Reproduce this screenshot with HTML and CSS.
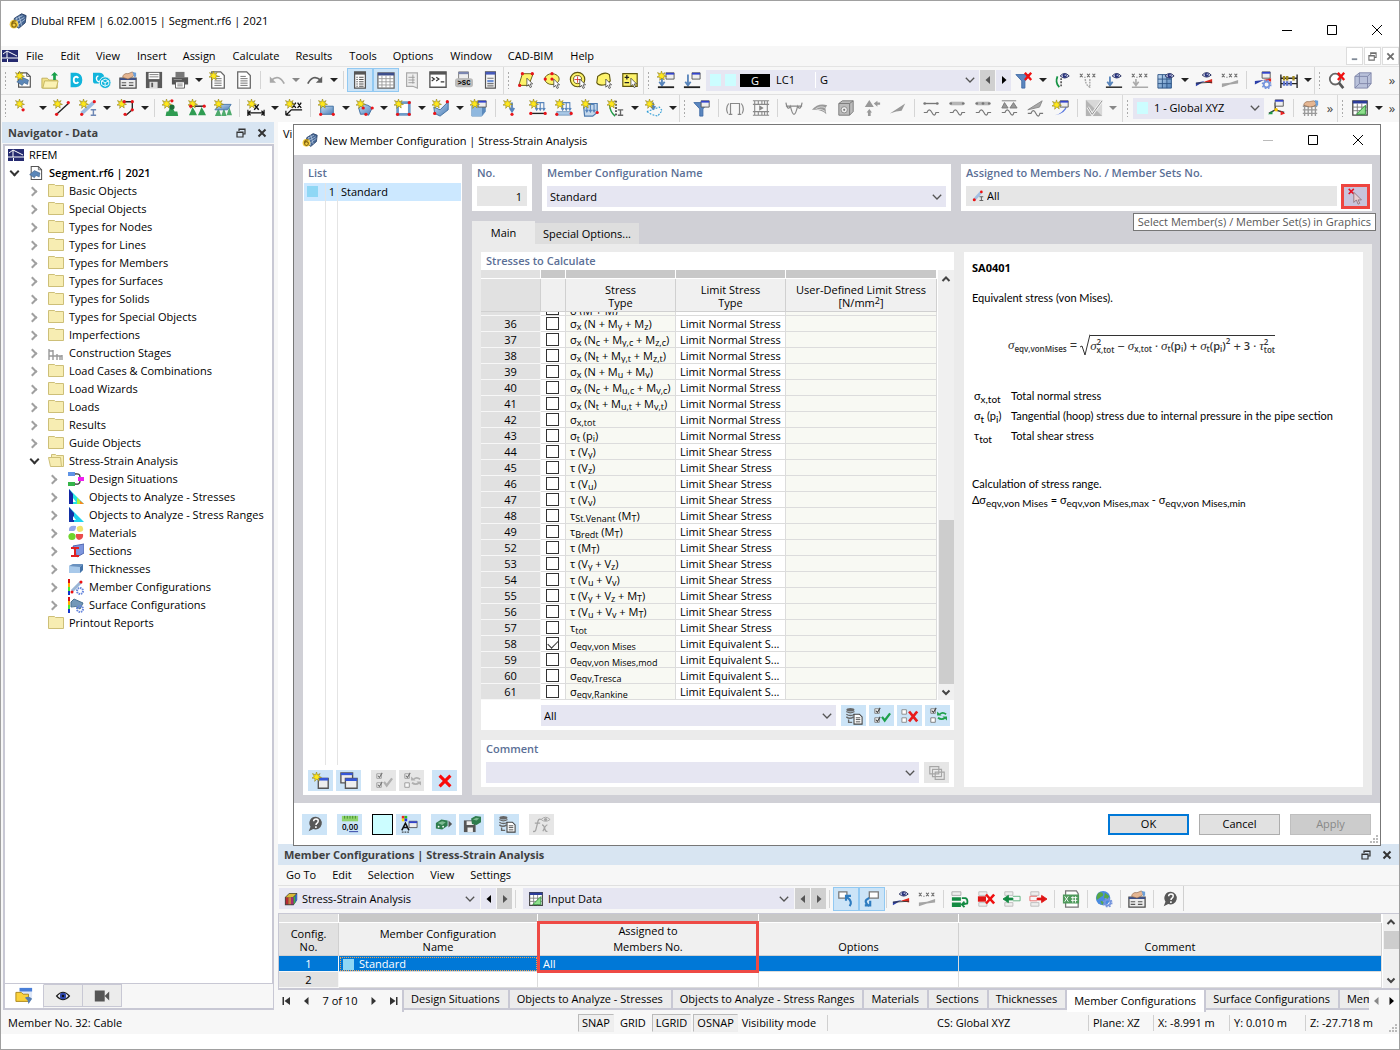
FILE: index.html
```html
<!DOCTYPE html>
<html lang="en">
<head>
<meta charset="utf-8">
<title>Dlubal RFEM | 6.02.0015 | Segment.rf6 | 2021</title>
<link rel="stylesheet" href="styles.css">
</head>
<body>
<svg class="sprite" aria-hidden="true">
<defs>
<path id="star" d="M5 0l1 3.2 3-1.4-1.6 2.8L10.5 6 7.4 6.6 8 10 5.4 7.8 3 10.4 3.4 7 0 6.8 2.6 4.8 .6 1.8 4 3.2z" fill="#ffe81a" stroke="#94851c" stroke-width=".7"/>
<circle id="dot" r="1.8" fill="#e8151b"/>
<g id="win"><path d="M0 0h9v7H0z" fill="#eee" stroke="#555"/><path d="M0 0h9v2H0z" fill="#3344cc"/></g>
<g id="eye"><path d="M0 3.5Q5 -2 10 3.5Q5 8 0 3.5z" fill="#dfe3f5" stroke="#1b2354"/><circle cx="5" cy="3.3" r="2.4" fill="#27327c"/><circle cx="5.6" cy="2.6" r=".7" fill="#fff"/></g>
<g id="gear"><circle r="3.2" fill="none" stroke="#7595dd" stroke-width="2"/><circle r="4.7" fill="none" stroke="#7595dd" stroke-width="1.6" stroke-dasharray="1.9 1.8"/></g>
<path id="pointer" d="M0 0v9l2-2 1.6 3.4 1.6-.8L3.6 6.4H6.4z" fill="#fff" stroke="#333" stroke-width=".8"/>
<path id="xmark" d="M1 1l7 8M8 1L1 9" stroke="#f01010" stroke-width="2.6" fill="none"/>
<path id="loads" d="M1 1h9M1.500 1v8M5.500 1v8M9.500 1v8M0 7l1.500 2.500L3 7M4 7l1.500 2.500L7 7M8 7l1.500 2.500L11 7" stroke="#5784bb" stroke-width="1.200" fill="none"/>
<linearGradient id="blue" x2="1" y2="1"><stop stop-color="#c5dcf2"/><stop offset="1" stop-color="#4d7fb8"/></linearGradient>
<path id="wave" d="M0 6h3.500Q6 0 9 6T13.500 6H17" stroke="#777" stroke-width="1.300" fill="none"/>
<path id="xxx" d="M1 3l3 4M4 3L1 7M9 3l3 4M12 3L9 7M15 3l3 4M18 3l-3 4M6 7h1.200" stroke="#666" stroke-width="1.200" fill="none"/>
</defs>
<symbol id="app" viewBox="0 0 20 20"><path d="M6 7L14 2l5 2-1 8-7 6-6-4z" fill="#466795" stroke="#243c63"/><path d="M7 8l8-4M8 11l9-5M10 14l8-6M11 4l3 11M8 6l3 11" stroke="#b5c7df" stroke-width=".9"/><circle cx="5.500" cy="13.500" r="4.800" fill="#f3cf46"/><path d="M8 10Q3 9 3 14M3.200 14.500a2.400 2.400 0 1 1 4.800 0a2.400 2.400 0 1 1-4.800 0" fill="none" stroke="#876710" stroke-width="1.400"/></symbol>
<symbol id="rfem" viewBox="0 0 16 12"><path d="M0 0h16v12H0z" fill="#252a70"/><path d="M0 8h16M5 1v7M1 4l4-3 10 5M5.500 9v3" stroke="#fff" fill="none"/></symbol>
<symbol id="file" viewBox="0 0 20 20"><path d="M4 2h9l4 4v12H4z" fill="#fff" stroke="#555" stroke-width="1.300"/><path d="M13 2v4h4" fill="none" stroke="#555"/><path d="M2 12l6-5 7 3-1 5-4-2-2 3z" fill="#5b87b8" stroke="#35577f" stroke-width=".6"/></symbol>
<symbol id="new" viewBox="0 0 20 20"><use href="#file"/><use href="#star"/></symbol>
<symbol id="open" viewBox="0 0 20 20"><path d="M1 8h6l2 2h9v9H1z" fill="#f2e28a" stroke="#bfae55"/><path d="M2 19l2-8h15l-2 8z" fill="#fbf2b4" stroke="#c3b35c"/><path d="M15 1l4 4h-2.500v5h-3V5H11z" fill="#18a04a"/></symbol>
<symbol id="center" viewBox="0 0 20 20"><path d="M4 2h6q7 1 7 8t-7 8H4z" fill="#12b5dc"/><path d="M12.500 8q-1-2-3-1.500Q7.500 7 7.500 10t2 3.500q2 .4 3-1.500" fill="none" stroke="#fff" stroke-width="2"/></symbol>
<symbol id="cloud" viewBox="0 0 20 20"><path d="M0 2h7q5 0 6 6v6H3q-3 0-3-3z" fill="#12b5dc"/><circle cx="13.500" cy="13" r="6.500" fill="#12b5dc" stroke="#f7f7f7"/><path d="M9.500 11l4-2 4 2v4l-4 2-4-2zM9.500 11l4 2 4-2M13.500 13v4" stroke="#fff" fill="none"/><path d="M6 5.500q-3 1-2 4t3 2" stroke="#fff" stroke-width="1.400" fill="none"/></symbol>
<symbol id="manage" viewBox="0 0 20 20"><path d="M1 8h18v11H1z" fill="#ececec" stroke="#4b4b4b" stroke-width="1.400"/><path d="M1 8h18v2H1z" fill="#3b4f8a"/><path d="M3 13h5M3 16h5M11 13h5M11 16h5" stroke="#555" stroke-width="1.200"/><path d="M4 7q1-5 6-4l5-2 3 3-4 3-4 2z" fill="#e5b692" stroke="#8d6448" stroke-width=".7"/><path d="M15 1l4 1v4l-2 1z" fill="#6c9fd8"/></symbol>
<symbol id="save" viewBox="0 0 20 20"><path d="M1 1h18v18H1z" fill="#5a5a5a"/><path d="M4 2h12v7H4z" fill="#fff"/><path d="M5 4h10M5 6.500h10" stroke="#777"/><path d="M5 12h9v7H5z" fill="#ddd"/><path d="M7 13h2v5H7z" fill="#5a5a5a"/></symbol>
<symbol id="print" viewBox="0 0 20 20"><path d="M5 1h10v6H5z" fill="#777"/><path d="M1 7h18v8H1z" fill="#555"/><path d="M5 12h10v7H5z" fill="#fff" stroke="#555"/><path d="M7 14.500h6M7 16.500h6" stroke="#777"/><path d="M3 9.500h9" stroke="#999"/></symbol>
<symbol id="doc" viewBox="0 0 20 20"><path d="M3 1h10l4 4v14H3z" fill="#fff" stroke="#666" stroke-width="1.400"/><path d="M6 6h6M6 8.500h8M6 11h8M6 13.500h8M6 16h8" stroke="#666"/></symbol>
<symbol id="newdoc" viewBox="0 0 20 20"><use href="#doc"/><use href="#star"/></symbol>
<symbol id="undo" viewBox="0 0 20 20"><path d="M4 10Q12 3 18 14" fill="none" stroke="#a9a9a9" stroke-width="2"/><path d="M2 6v7h7z" fill="#a9a9a9"/></symbol>
<symbol id="redo" viewBox="0 0 20 20"><path d="M16 10Q8 3 2 14" fill="none" stroke="#5e5e5e" stroke-width="2"/><path d="M18 6v7h-7z" fill="#5e5e5e"/></symbol>
<symbol id="plist" viewBox="0 0 20 20"><path d="M4 1h12v18H4z" fill="#fafafa" stroke="#555" stroke-width="1.400"/><path d="M4 1h12v3H4z" fill="#555"/><path d="M6 7h1.500M9 7h5M6 9.500h1.500M9 9.500h5M6 12h1.500M9 12h5M6 14.500h1.500M9 14.500h5M6 17h1.500M9 17h5" stroke="#555" stroke-width="1.200"/></symbol>
<symbol id="pgrid" viewBox="0 0 20 20"><path d="M1 2h18v17H1z" fill="#fff" stroke="#666" stroke-width="1.400"/><path d="M1 2h18v3H1z" fill="#3d4f8d"/><path d="M1 8.500h18M1 12h18M1 15.500h18M5.500 5v14M10 5v14M14.500 5v14" stroke="#9a9a9a"/></symbol>
<symbol id="glist" viewBox="0 0 20 20"><path d="M4 2h12v17l-5-2H4z" fill="#eee" stroke="#aaa" stroke-width="1.300"/><path d="M6 7h7M6 10h7M6 13h7M11 4v10" stroke="#999"/></symbol>
<symbol id="console" viewBox="0 0 20 20"><path d="M1 1h18v17H1z" fill="#fff" stroke="#555" stroke-width="1.500"/><path d="M1 1h18v3H1z" fill="#555"/><path d="M3 7l3 2-3 2M8 7l3 2-3 2M13 12h4" fill="none" stroke="#333" stroke-width="1.300"/></symbol>
<symbol id="script" viewBox="0 0 20 20"><path d="M4 1h11v8H4z" fill="#eee" stroke="#777"/><path d="M4 1h11v2.500H4z" fill="#7b86b0"/><rect x="0" y="8" width="20" height="10" rx="3" fill="#bbb"/><text x="10" y="16" font-size="8" text-anchor="middle" class="mono">&gt;SC</text></symbol>
<symbol id="panel" viewBox="0 0 20 20"><path d="M5 1h11v18H5z" fill="#f5f5f5" stroke="#555" stroke-width="1.300"/><path d="M5 1h11v3H5z" fill="#4659b9"/><path d="M7 8h7M7 14h7M7 16.500h7" stroke="#777" stroke-width="1.200"/><path d="M7 10h7v2.500H7z" fill="#6b8fd4"/></symbol>
<symbol id="selpoly" viewBox="0 0 20 20"><path d="M6 3h12l-5 13H2z" fill="#fdf36b" stroke="#5f560c"/><use href="#dot" x="6" y="3"/><use href="#dot" x="17" y="3"/><use href="#dot" x="3" y="16"/><use href="#pointer" x="11" y="8"/></symbol>
<symbol id="selell" viewBox="0 0 20 20"><ellipse cx="10" cy="9" rx="8" ry="6" fill="#fdf36b" stroke="#5f560c"/><use href="#dot" x="10" y="3"/><use href="#dot" x="2.500" y="9"/><use href="#dot" x="10" y="9"/><use href="#pointer" x="12" y="9"/></symbol>
<symbol id="selcirc" viewBox="0 0 20 20"><circle cx="9.500" cy="9.500" r="8" fill="#fdf36b" stroke="#5f560c" stroke-width="1.300"/><circle cx="9.500" cy="9.500" r="4.500" fill="#fff" stroke="#5f560c"/><path d="M9.500 6v7M6 9.500h7" stroke="#d33"/><use href="#pointer" x="12" y="9"/></symbol>
<symbol id="sellas" viewBox="0 0 20 20"><path d="M3 6q8-6 13-2l1 7-5 4q-8 2-10-2z" fill="#fdf36b" stroke="#5f560c" stroke-width="1.200"/><use href="#pointer" x="12" y="9"/></symbol>
<symbol id="selpm" viewBox="0 0 20 20"><path d="M2 3h16v14H2z" fill="#fdf36b" stroke="#5f560c" stroke-width="1.300"/><path d="M4 7h5M6.500 4.500v5M4 13h5" stroke="#222" stroke-width="1.400"/><use href="#pointer" x="11" y="8"/></symbol>
<symbol id="load" viewBox="0 0 20 20"><use href="#win" x="10" y="2"/><path d="M5.500 4v11M2.500 12l3 4 3-4" fill="none" stroke="#5784bb" stroke-width="2"/><path d="M1 18h18" stroke="#222" stroke-width="2"/></symbol>
<symbol id="loadnew" viewBox="0 0 20 20"><use href="#load"/><use href="#star"/></symbol>
<symbol id="funnel" viewBox="0 0 20 20"><path d="M1 4h16l-6 7v8H7.500v-8z" fill="#5b87c0" stroke="#406ba6"/></symbol>
<symbol id="funnelx" viewBox="0 0 20 20"><use href="#funnel"/><use href="#xmark" x="10" y="1"/></symbol>
<symbol id="funnelw" viewBox="0 0 20 20"><use href="#funnel"/><use href="#win" x="9" y="2"/></symbol>
<symbol id="eyearc" viewBox="0 0 20 20"><use href="#eye" x="8" y="2"/><path d="M5 6Q2 13 7 18" fill="none" stroke="#159344" stroke-width="2"/><path d="M9 8v10" stroke="#333" stroke-width="1.500" stroke-dasharray="2 1.500"/></symbol>
<symbol id="xxxarc" viewBox="0 0 20 20"><use href="#xxx"/><path d="M7 9q0 6 5 9M12 9v10" fill="none" stroke="#aaa" stroke-width="1.600" stroke-dasharray="2 1"/></symbol>
<symbol id="eyeload" viewBox="0 0 20 20"><use href="#eye" x="8" y="2"/><path d="M5.500 6v9M2.500 12l3 4 3-4" fill="none" stroke="#5784bb" stroke-width="2"/><path d="M1 18h18" stroke="#222" stroke-width="1.600"/></symbol>
<symbol id="xxxload" viewBox="0 0 20 20"><use href="#xxx"/><path d="M5.500 9v6M2.500 12l3 4 3-4M1 18h18" fill="none" stroke="#aaa" stroke-width="1.800"/></symbol>
<symbol id="eyegrid" viewBox="0 0 20 20"><path d="M1 4h15v15H1z" fill="url(#blue)" stroke="#2c5484"/><path d="M1 9h15M1 14h15M6 4v15M11 4v15" stroke="#2c5484"/><use href="#eye" x="9" y="2"/></symbol>
<symbol id="eyewedge" viewBox="0 0 20 20"><use href="#eye" x="8" y="1"/><path d="M1 17v-4l10-2z" fill="#2c3fa8"/><path d="M10 12l9-3v5z" fill="#e0261d"/><path d="M1 13.500l18-1" stroke="#333"/></symbol>
<symbol id="xxxwedge" viewBox="0 0 20 20"><use href="#xxx"/><path d="M1 18v-4l9-1 9-3v4l-9 1z" fill="#a5a5a5"/></symbol>
<symbol id="wedgegear" viewBox="0 0 20 20"><use href="#win" x="9" y="1"/><path d="M1 15v-4l10-1z" fill="#2c3fa8"/><path d="M10 10l9-2v4z" fill="#e0261d"/><use href="#gear" x="14" y="15"/></symbol>
<symbol id="abacus" viewBox="0 0 20 20"><path d="M1 4v15M19 4v15M1 8h18M1 14h18" stroke="#222" stroke-width="1.500"/><path d="M4.500 5.500v5M8 5.500v5M15 5.500v5" stroke="#a08a20" stroke-width="2.600"/><path d="M4.500 11.500v5M8 11.500v5M12 11.500v5" stroke="#5a70c8" stroke-width="2.600"/></symbol>
<symbol id="zoomx" viewBox="0 0 20 20"><circle cx="8" cy="9" r="6" fill="#fff" stroke="#666" stroke-width="2"/><path d="M12 13l5 6" stroke="#555" stroke-width="3"/><use href="#xmark" x="10" y="1"/></symbol>
<symbol id="cube" viewBox="0 0 20 20"><path d="M1 6l5-4h13v12l-4 5H1z" fill="#b9c1da" stroke="#7f86a8"/><path d="M1 6h14v13M15 6l4-4M6 2v12h13M6 14l-5 5" fill="none" stroke="#7f86a8"/></symbol>
<symbol id="cubeblue" viewBox="0 0 20 20"><path d="M2 8l5-4h10v10l-4 5H2z" fill="#a9cbea" stroke="#6c97c2"/><path d="M13 8l4-4v10l-4 5z" fill="#5c8abd"/><path d="M2 8h11v11H2z" fill="#8fb8df"/><use href="#win" x="9" y="2"/><use href="#star"/></symbol>
<symbol id="nnode" viewBox="0 0 20 20"><use href="#star"/><use href="#dot" x="9" y="12"/></symbol>
<symbol id="nline" viewBox="0 0 20 20"><path d="M4 17L17 5" stroke="#222" stroke-width="1.500"/><use href="#star"/><use href="#dot" x="4" y="17"/><use href="#dot" x="17" y="4"/></symbol>
<symbol id="nmember" viewBox="0 0 20 20"><path d="M3 16L16 4" stroke="#9dbbe0" stroke-width="4"/><use href="#star"/><use href="#dot" x="3" y="17"/><use href="#dot" x="17" y="3"/><path d="M13 12h6M16 12v6M13 18h6" stroke="#6d87b5" stroke-width="1.600"/></symbol>
<symbol id="npoly" viewBox="0 0 20 20"><path d="M8 3h9v9l-7 6" stroke="#222" stroke-width="1.500" fill="none"/><use href="#star"/><use href="#dot" x="8" y="3"/><use href="#dot" x="17" y="3"/><use href="#dot" x="17" y="12"/><use href="#dot" x="9" y="17"/></symbol>
<symbol id="supp" viewBox="0 0 20 20"><path d="M10 7l4 7h3l1 5H4l1-5h2z" fill="#2f9c52"/><circle cx="11" cy="9" r="3" fill="#1d6e39"/><use href="#star"/><use href="#dot" x="11" y="2"/></symbol>
<symbol id="suppl" viewBox="0 0 20 20"><path d="M5 9l3 5 2 4H1l2-4zM15 9l3 5 2 4h-9l2-4z" fill="#2f9c52"/><path d="M2 8h16" stroke="#222" stroke-width="1.600"/><use href="#star"/><use href="#dot" x="18" y="8"/><use href="#dot" x="3" y="8"/></symbol>
<symbol id="supps" viewBox="0 0 20 20"><path d="M5 10l3 9H1zM11 10l3 9H8zM17 9l3 9h-6z" fill="#4fab6d"/><path d="M1 12l5-6h13l-4 6z" fill="url(#blue)" stroke="#4575a8"/><use href="#star"/></symbol>
<symbol id="dimx" viewBox="0 0 20 20"><path d="M1 12v7M19 12v7M1 15.500h18M4 13l-3 2.500L4 18M16 13l3 2.500-3 2.500" stroke="#111" fill="none" stroke-width="1.300"/><path d="M8 6l5 6M13 6l-5 6" stroke="#111" stroke-width="1.600"/><use href="#star"/></symbol>
<symbol id="dimxx" viewBox="0 0 20 20"><path d="M1 18l6-6h12M1 18v-5M1 18h5" stroke="#111" fill="none" stroke-width="1.400"/><path d="M8 4l4 6M12 4l-4 6M14 4l4 6M18 4l-4 6" stroke="#111" stroke-width="1.500"/><use href="#star"/></symbol>
<symbol id="nsurf" viewBox="0 0 20 20"><path d="M3 8h14v9H3z" fill="url(#blue)" stroke="#3a6b9e"/><use href="#star"/><use href="#dot" x="17" y="17"/><use href="#dot" x="3" y="17"/></symbol>
<symbol id="nsurf2" viewBox="0 0 20 20"><path d="M3 10q5-8 15 0l-4 8q-4-2-9-1z" fill="url(#blue)" stroke="#3a6b9e"/><use href="#star"/><use href="#dot" x="18" y="10"/><use href="#dot" x="8" y="10"/><use href="#dot" x="11" y="17"/></symbol>
<symbol id="nopen" viewBox="0 0 20 20"><path d="M4 4h13v13H4z" fill="#fff" stroke="#6f9bc8" stroke-width="3"/><use href="#star"/><use href="#dot" x="17" y="4"/><use href="#dot" x="4" y="17"/><use href="#dot" x="17" y="17"/></symbol>
<symbol id="nsurf3" viewBox="0 0 20 20"><path d="M2 9l7 3 9-9v9l-9 7-6-3z" fill="url(#blue)" stroke="#3a6b9e"/><use href="#star"/><use href="#dot" x="17" y="3"/><use href="#dot" x="3" y="16"/></symbol>
<symbol id="lnode" viewBox="0 0 20 20"><path d="M10 4v9M7.500 10l2.500 4 2.500-4" stroke="#5784bb" stroke-width="2" fill="none"/><use href="#star"/><use href="#dot" x="10" y="17"/></symbol>
<symbol id="lline" viewBox="0 0 20 20"><use href="#loads" x="7" y="3"/><use href="#star"/><path d="M2 16h16" stroke="#222" stroke-width="1.500"/><use href="#dot" x="2" y="16"/><use href="#dot" x="18" y="16"/></symbol>
<symbol id="lsurf" viewBox="0 0 20 20"><use href="#loads" x="7" y="3"/><use href="#star"/><path d="M2 14h16v4H2z" fill="#a9c8e6" stroke="#5a83ad" stroke-width=".7"/><use href="#dot" x="2" y="17"/><use href="#dot" x="18" y="16"/></symbol>
<symbol id="lsolid" viewBox="0 0 20 20"><path d="M3 9l4-4h11v10l-5 4H4z" fill="#c4d8ec" stroke="#4c7aae" stroke-width="1.300"/><use href="#loads" x="5" y="5"/><use href="#star"/><use href="#dot" x="18" y="15"/></symbol>
<symbol id="imperf" viewBox="0 0 20 20"><path d="M3 6q0 8 6 13" stroke="#1d9a45" stroke-width="1.600" fill="none"/><path d="M10 2v17" stroke="#222" stroke-width="1.600" stroke-dasharray="2 1.500"/><use href="#star"/><path d="M12 12h6M15 12v6M12 18h6" stroke="#666" stroke-width="1.500"/></symbol>
<symbol id="lfree" viewBox="0 0 20 20"><path d="M2 14l14-5 3 4-5 6-7-2z" fill="none" stroke="#2b9bd6" stroke-width="1.200" stroke-dasharray="2 1.500"/><path d="M9 4v6M6.500 8l2.500 3 2.500-3" stroke="#5784bb" stroke-width="2" fill="none"/><use href="#star"/></symbol>
<symbol id="frame" viewBox="0 0 20 20"><path d="M5 17V5h10v12M3 17h4M13 17h4M3 5q-4 5-1 11M17 5q4 5 1 11" fill="none" stroke="#888" stroke-width="1.300"/></symbol>
<symbol id="film" viewBox="0 0 20 20"><path d="M1 2h18M1 6h18M1 14h18M1 18h18M3 2v16M17 2v16M7 2v4M11 2v4M14 2v4M7 14v4M11 14v4M14 14v4" stroke="#888" fill="none" stroke-width="1.200"/><path d="M8 7l5 3-5 3z" fill="#888"/></symbol>
<symbol id="moment" viewBox="0 0 20 20"><path d="M1 8h18M1 4q2 10 5 4 4 18 8 0 3 6 5-4" fill="none" stroke="#888" stroke-width="1.300"/></symbol>
<symbol id="fan" viewBox="0 0 20 20"><path d="M1 12q7-8 17-5l-2 3 1 7q-5-6-16-5z" fill="#999"/><path d="M5 11q6-4 11-1M6 12q6-2 10 2" stroke="#ddd" fill="none"/></symbol>
<symbol id="dice" viewBox="0 0 20 20"><path d="M2 5l4-3h12v12l-4 4H2z" fill="#bbb" stroke="#777"/><path d="M2 5h12v13M14 5l4-3" stroke="#777" fill="none"/><circle cx="8" cy="12" r="3.500" fill="#eee" stroke="#888"/><circle cx="8" cy="12" r="1.200" fill="#777"/></symbol>
<symbol id="react" viewBox="0 0 20 20"><path d="M7 1l5 8H2zM7 11l3 4H8.500v4h-3v-4H4zM12 5l4-3v2h3v2.500h-3v2z" fill="#999"/></symbol>
<symbol id="wedge" viewBox="0 0 20 20"><path d="M1 16L18 5l-4 8-6 1z" fill="#999"/></symbol>
<symbol id="s1" viewBox="0 0 20 20"><path d="M3 5h14" stroke="#777" stroke-width="1.500"/><circle cx="3" cy="5" r="1.500"/><circle cx="17" cy="5" r="1.500"/><use href="#wave" x="2" y="9"/></symbol>
<symbol id="s2" viewBox="0 0 20 20"><path d="M3 5h14" stroke="#b5b5b5" stroke-width="4"/><circle cx="3" cy="5" r="1.500"/><circle cx="17" cy="5" r="1.500"/><use href="#wave" x="2" y="9"/></symbol>
<symbol id="s3" viewBox="0 0 20 20"><path d="M3 5h14" stroke="#b5b5b5" stroke-width="4"/><circle cx="3" cy="5" r="1.500"/><circle cx="10" cy="5" r="1.500"/><circle cx="17" cy="5" r="1.500"/><use href="#wave" x="2" y="9"/></symbol>
<symbol id="s4" viewBox="0 0 20 20"><path d="M2 2h16M5 4l4 6H2zM15 4l4 6h-8z" stroke="#777" fill="#999"/><use href="#wave" x="2" y="9"/></symbol>
<symbol id="s5" viewBox="0 0 20 20"><path d="M2 12L18 2l-3 7z" fill="#aaa" stroke="#888"/><use href="#wave" x="2" y="10"/></symbol>
<symbol id="s6" viewBox="0 0 20 20"><path d="M3 18q8-1 14-12-1 10-14 12z" fill="#5c7ae0"/><use href="#win" x="9" y="2"/><use href="#star" y="1"/></symbol>
<symbol id="check" viewBox="0 0 20 20"><path d="M1 1h18v18H1z" fill="#d8d8d8"/><path d="M1 1v18h18z" fill="#b4b4b4"/><path d="M3 9l5 8L19 2" fill="none" stroke="#f4f4f4" stroke-width="3"/><path d="M3 9l5 8L19 2" fill="none" stroke="#888"/></symbol>
<symbol id="axes" viewBox="0 0 20 20"><path d="M8 12V4M8 12l10 3M8 12l-7 4" stroke="#333" stroke-width="1.500"/><use href="#win" x="8" y="1"/><circle cx="9" cy="12" r="2" fill="#f5c400"/><path d="M0 17l5-4v4z" fill="#1d9a45"/><path d="M19 16l-5-3v5z" fill="#e22"/></symbol>
<symbol id="hatch" viewBox="0 0 20 20"><path d="M2 8h16M2 12h16M2 16h16M4 6v13M8 6v13M12 6v13M16 6v13" stroke="#999" stroke-width="1.500"/><path d="M3 7q1-5 6-4l5-1 4 3-4 3-4 1z" fill="#e5b692" stroke="#8d6448" stroke-width=".7"/><path d="M15 1l4 1v5l-2 1z" fill="#6c9fd8"/></symbol>
<symbol id="ttri" viewBox="0 0 20 20"><path d="M2 2h16v16H2z" fill="#fff" stroke="#444" stroke-width="1.400"/><path d="M2 2h16v3H2z" fill="#2c3c9a"/><path d="M2 9h16M2 13h16M7 5v13M12 5v13" stroke="#777"/><path d="M16 7v10H6z" fill="#8ee08c" stroke="#2a8a36"/></symbol>
<symbol id="folder" viewBox="0 0 16 16"><path d="M.5 1.500h6l1 1h8v11h-15z" fill="#f7edb2" stroke="#cdbf78"/></symbol>
<symbol id="folderopen" viewBox="0 0 16 16"><path d="M3.500 13.500V1.500h4l1 1h7v11z" fill="#f7edb2" stroke="#cdbf78"/><path d="M.5 4.500h12l1 9h-11z" fill="#f7edb2" stroke="#cdbf78"/></symbol>
<symbol id="stages" viewBox="0 0 16 16"><path d="M1 4v11M5 5v10M9 9v6M14 10v5M1 6h4M1 11h13M12 15v-4" fill="none" stroke="#999" stroke-width="1.400"/></symbol>
<symbol id="situ" viewBox="0 0 16 16"><path d="M0 1h7v4H0z" fill="#5f93e6"/><path d="M0 11h7v4H0z" fill="#35b44a"/><path d="M10 6h6v4h-6z" fill="#f01ef0"/><path d="M7 3q5-1 5 3M7 13q5 1 5-3" fill="none" stroke="#333" stroke-width="1.300"/></symbol>
<symbol id="tri1" viewBox="0 0 16 16"><path d="M1 0v15h15z" fill="#26e6e0"/><path d="M1 0v15h4V5z" fill="#1226a5"/><path d="M9 8.500l3 3V15H9z" fill="#b4f03a"/><path d="M12 11.500V15h4z" fill="#f6891f"/><path d="M5 9v4h3z" fill="#fff"/></symbol>
<symbol id="tri2" viewBox="0 0 16 16"><path d="M1 0v15h15z" fill="#1ed3ee"/><path d="M1 0v15h5V6z" fill="#1230a5"/><path d="M5 9v4h3z" fill="#fff"/></symbol>
<symbol id="mats" viewBox="0 0 16 16"><path d="M1 6Q0 0 8 1q0 4-2 5z" fill="#93a7ea"/><path d="M9 2q5-3 6 1t-4 4q-3-1-2-5z" fill="#efe46a"/><circle cx="4" cy="11.500" r="3.600" fill="#6fd52c"/><path d="M8 9h7q1 5-4 6-4-1-3-6z" fill="#ea4b4b"/></symbol>
<symbol id="sect" viewBox="0 0 16 16"><path d="M5 3l11-2v9l-7 4z" fill="#7d95dd" stroke="#5268b0"/><path d="M3 5h8M7 5v8M3 13h8" stroke="#e02020" stroke-width="2"/></symbol>
<symbol id="thick" viewBox="0 0 16 16"><path d="M1 5l4-2h10v6l-3 3H1z" fill="#a8c9ea"/><path d="M12 6l3-3v6l-3 3z" fill="#4573a8"/><path d="M1 5l4-2h10l-3 3z" fill="#6b92bf"/></symbol>
<symbol id="bar" viewBox="0 0 16 16"><path d="M0 0h2v4H0z" fill="#d11"/><path d="M0 4h2v4H0z" fill="#fa0"/><path d="M0 8h2v4H0z" fill="#4e3"/><path d="M0 12h2v4H0z" fill="#13c"/></symbol>
<symbol id="mconf" viewBox="0 0 16 16"><use href="#bar"/><path d="M4 12l9-9" stroke="#9ab5d5" stroke-width="3"/><circle cx="4" cy="13" r="1.500" fill="#e11"/><circle cx="13" cy="3" r="1.500" fill="#e11"/><circle cx="12" cy="12" r="3" fill="none" stroke="#6787dd" stroke-width="2" stroke-dasharray="1.500 .8"/></symbol>
<symbol id="sconf" viewBox="0 0 16 16"><use href="#bar"/><path d="M3 5l3-3 9 4-3 6q-4-4-9-2z" fill="#7398b8" stroke="#48708f"/><circle cx="12" cy="12" r="3" fill="none" stroke="#6787dd" stroke-width="2" stroke-dasharray="1.500 .8"/></symbol>
<symbol id="chev" viewBox="0 0 10 6"><path d="M.8.8L5 5 9.200.8" fill="none" stroke="#555" stroke-width="1.300"/></symbol>
<symbol id="float" viewBox="0 0 10 10"><path d="M3 3V1h6v5H7M1 4h6v5H1zM1 4.500h6M3 1.500h6" fill="none" stroke="#333" stroke-width="1.200"/></symbol>
<symbol id="close" viewBox="0 0 10 10"><path d="M1.500 1.500l7 7M8.500 1.500l-7 7" stroke="#333" stroke-width="2"/></symbol>
<symbol id="nwin" viewBox="0 0 20 20"><path d="M7 7h11v11H7z" fill="#eee" stroke="#555" stroke-width="1.500"/><path d="M7 6.500h11v3H7z" fill="#3558d8"/><use href="#star"/></symbol>
<symbol id="cwin" viewBox="0 0 20 20"><path d="M1 1h13v11H1z" fill="#eee" stroke="#555" stroke-width="1.500"/><path d="M1 1h13v2.500H1z" fill="#3558d8"/><path d="M6 7h13v11H6z" fill="#eee" stroke="#555" stroke-width="1.500"/><path d="M6 7h13v3H6z" fill="#3558d8"/></symbol>
<symbol id="chk1" viewBox="0 0 20 20"><path d="M2 2h5v5H2zM2 12h5v5H2z" fill="#fff" stroke="#777"/><path d="M3 4l2 2 3-5M3 14l2 2 3-5" fill="none" stroke="#444" stroke-width="1.200"/><path d="M10 11l3 4 6-8" fill="none" stroke="currentColor" stroke-width="2.500"/></symbol>
<symbol id="chk2" viewBox="0 0 20 20"><path d="M1 3h5v5H1zM1 12h5v5H1z" fill="#fff" stroke="#888"/><path d="M9 5l9 11M18 5L9 16" stroke="#e81c1c" stroke-width="3"/></symbol>
<symbol id="chk3" viewBox="0 0 20 20"><path d="M2 2h5v5H2zM2 12h5v5H2z" fill="#fff" stroke="#777"/><path d="M3 4l2 2 3-5" fill="none" stroke="#444" stroke-width="1.200"/><path d="M19 8q-4-3-7 0M10 12q4 3 8 0" fill="none" stroke="currentColor" stroke-width="2"/><path d="M9 5v4.500h5zM20 15v-4.500h-5z" fill="currentColor"/></symbol>
<symbol id="del" viewBox="0 0 20 20"><path d="M4 4l12 12M16 4L4 16" stroke="#fa0a0a" stroke-width="3.400"/></symbol>
<symbol id="help" viewBox="0 0 20 20"><path d="M11 2a7 7 0 1 1-3 13.500L3 18l2-5A7 7 0 0 1 11 2z" fill="#585858"/><path d="M8.500 7q0-2.500 2.700-2.500T13.500 7q0 1.200-1.200 2-1.200.8-1.200 2M11 12.500v2" fill="none" stroke="#fff" stroke-width="1.700"/></symbol>
<symbol id="units" viewBox="0 0 20 20"><path d="M1 1h18v6H1z" fill="#8fd36a"/><path d="M4 1v3M7 1v3M10 1v3M13 1v3M16 1v3" stroke="#3c8a2a"/><text x="10" y="17" font-size="9" text-anchor="middle" class="sans">0,00</text><path d="M9 18.500h10" stroke="#24349e"/></symbol>
<symbol id="disp" viewBox="0 0 20 20"><path d="M2 1h3v3H2z" fill="#e22"/><path d="M5 1h3v3H5z" fill="#2b2"/><path d="M2 4h3v3H2z" fill="#fd0"/><path d="M5 4h3v3H5z" fill="#23d"/><path d="M2 17l4-8 4 8M3.500 14h5" stroke="#111" fill="none" stroke-width="1.700"/><use href="#win" x="10" y="7"/><path d="M2 19h8" stroke="#111" stroke-dasharray="2 1"/></symbol>
<symbol id="imp" viewBox="0 0 20 20"><path d="M1 9l6-4 7 1v6l-6 4-7-1z" fill="#2f7d4d"/><path d="M3 9l5-2 4 1-4 3z" fill="#7dbb92"/><circle cx="9" cy="13" r="1" fill="#fff"/><circle cx="4" cy="13" r="1" fill="#fff"/><path d="M15 6l4 4-4 4z" fill="#555"/></symbol>
<symbol id="exp" viewBox="0 0 20 20"><path d="M1 6h13v13H1z" fill="#555"/><path d="M4 7h8v4H4zM5 14h6v5H5z" fill="#eee"/><path d="M9 4l5-3 6 1v6l-5 3-5-1z" fill="#2f7d4d"/><path d="M11 5l4-2 3 1-3 2z" fill="#7dbb92"/></symbol>
<symbol id="dbdoc" viewBox="0 0 20 20"><ellipse cx="6" cy="3" rx="4.500" ry="2" fill="#666"/><path d="M1.500 5q4.500 3 9 0M1.500 8q4.500 3 9 0M1.500 11q4 3 8 0M4 14v3h4" fill="none" stroke="#666" stroke-width="1.500"/><path d="M10 8h6l3 3v8h-9z" fill="#fff" stroke="#444" stroke-width="1.200"/><path d="M12 12h5M12 14h5M12 16.500h5" stroke="#444"/></symbol>
<symbol id="fx" viewBox="0 0 20 20"><path d="M9 5q-3-2-4 4l-2 8q-1 2-3 1M2 9h6M10 11q2 0 3 4t3 3M16 11q-2 0-5 7" fill="none" stroke="#888" stroke-width="1.400"/><path d="M9 5q5-5 10 0-5 4-10 0z" fill="none" stroke="#888"/><circle cx="14" cy="5" r="1.800" fill="#888"/></symbol>
<symbol id="stack" viewBox="0 0 20 20"><path d="M2 3h10v8H2zM5 6h10v8H5zM8 9h10v8H8z" fill="#eee" stroke="#8a8a8a" stroke-width="1.300"/></symbol>
<symbol id="pickx" viewBox="0 0 20 20"><path d="M2 1l6 6M8 1L2 7" stroke="#e81123" stroke-width="1.800"/><path d="M8 5v12l3-3 2 5 2-1-2-4h4z" fill="#e8cfd2" stroke="#8a7078"/></symbol>
<symbol id="member" viewBox="0 0 16 16"><path d="M3 13L12 3" stroke="#a3bfe2" stroke-width="3.500"/><circle cx="3" cy="13" r="2" fill="#e11"/><circle cx="12.500" cy="2.500" r="1.800" fill="#e11"/><path d="M10 9h5M12.500 9v5M10 14h5" stroke="#555" stroke-width="1.200"/></symbol>
<symbol id="prism" viewBox="0 0 16 16"><path d="M1 6l5-5h9v8l-4 6H1z" fill="#444"/><path d="M2 6h3v8H2z" fill="#b52a35"/><path d="M5 6h3v8H5z" fill="#c97b3e"/><path d="M2 6l4-4h8l-4 4z" fill="#d8b936"/><path d="M8 6h3v8H8z" fill="#a82c70"/><path d="M11 6l2-2v8l-2 2z" fill="#38b04b"/><path d="M13 4l2-2v7l-2 3z" fill="#3a6bd0"/></symbol>
<symbol id="jump1" viewBox="0 0 20 20"><path d="M2 2h9v7H2z" fill="#fff" stroke="#777" stroke-width="1.400"/><path d="M14 18q4-5-3-10M10 12V6.500h5.500" fill="none" stroke="#2e7cc0" stroke-width="2.400"/></symbol>
<symbol id="jump2" viewBox="0 0 20 20"><path d="M7 2h10v7H7z" fill="#fff" stroke="#777" stroke-width="1.400"/><path d="M7 9q-8 3 0 9M2 17h6v-5" fill="none" stroke="#2e7cc0" stroke-width="2.400"/></symbol>
<symbol id="rowins" viewBox="0 0 20 20"><path d="M1 2h10v4H1z" fill="#eee" stroke="#aaa"/><path d="M1 8h10v4H1zM1 14h10v5H1z" fill="#128a42"/><path d="M12 9h4q3 1 2 6l-5 1M15 13l-3 3 3 3" fill="none" stroke="#128a42" stroke-width="2"/></symbol>
<symbol id="rowdel" viewBox="0 0 20 20"><path d="M2 2h9v4H2zM2 14h9v4H2z" fill="#eee" stroke="#bbb"/><path d="M1 7h9v6H1z" fill="#e01515"/><path d="M10 5l9 10M19 5l-9 10" stroke="#f01010" stroke-width="2.800"/></symbol>
<symbol id="rowgrn" viewBox="0 0 20 20"><path d="M2 2h9v4H2zM2 14h9v4H2z" fill="#eee" stroke="#bbb"/><path d="M0 10l6-4v3h5v2H6v3z" fill="#128a42" stroke="#128a42"/><path d="M11 7h8v5h-8" fill="none" stroke="#5cb07c"/></symbol>
<symbol id="rowred" viewBox="0 0 20 20"><path d="M2 2h9v4H2zM2 14h9v4H2z" fill="#eee" stroke="#bbb"/><path d="M20 10l-6-4v3H9v2h5v3z" fill="#e01515" stroke="#e01515"/><path d="M9 7H1v5h8" fill="none" stroke="#e86a6a"/></symbol>
<symbol id="excel" viewBox="0 0 20 20"><path d="M4 1h12l2 3v15H4z" fill="#fff" stroke="#777" stroke-width="1.400"/><path d="M1 5h18v10H1z" fill="#4f9a5c"/><path d="M3 7l4 6M7 7l-4 6M10 8.500h7M10 11.500h7M12 7v7M15 7v7" stroke="#fff"/></symbol>
<symbol id="globe" viewBox="0 0 20 20"><circle cx="9" cy="9" r="8" fill="#4a8be0"/><path d="M4 3q5-2 5 3l-4 3-3 2q-1-5 2-8zM11 3l5 4-3 4-3-2zM6 12l4 1-2 4z" fill="#57a845"/><use href="#gear" x="14" y="14"/></symbol>
<symbol id="navtree" viewBox="0 0 20 20"><path d="M6 1h13v13H6z" fill="#dfe8f8"/><path d="M5 1h14v4H5z" fill="#4a7fd8"/><path d="M1 6h6l2 2h6v8H1z" fill="#fbd23c" stroke="#a88214"/><path d="M11 12q4-3 8 1l-4 6-1-4z" fill="#557db1"/></symbol>
<symbol id="viewtab" viewBox="0 0 20 20"><path d="M2 10q8-9 16 0-8 9-16 0z" fill="#fff" stroke="#222" stroke-width="1.500"/><circle cx="10" cy="10" r="4" fill="#2d47ae"/><circle cx="10" cy="10" r="1.600" fill="#111"/></symbol>
<symbol id="cam" viewBox="0 0 20 20"><path d="M2 4h11v12H2zM13 10l5-5v10z" fill="#555"/></symbol>
<symbol id="first" viewBox="0 0 8 8"><path d="M0 0h1.500v8H0zM7.500 0v8L2 4z"/></symbol>
<symbol id="prev" viewBox="0 0 8 8"><path d="M6 0v8L1.500 4z"/></symbol>
<symbol id="next" viewBox="0 0 8 8"><path d="M2 0v8l4.500-4z"/></symbol>
<symbol id="last" viewBox="0 0 8 8"><path d="M6.500 0H8v8H6.500zM.5 0v8L6 4z"/></symbol>
<symbol id="up" viewBox="0 0 10 10"><path d="M1.500 7L5 3.500 8.500 7" fill="none" stroke="#444" stroke-width="2"/></symbol>
<symbol id="down" viewBox="0 0 10 10"><path d="M1.500 3.500L5 7l3.500-3.500" fill="none" stroke="#444" stroke-width="2"/></symbol>
</svg>

<div class="app">
<header class="titlebar">
  <svg class="i18"><use href="#app"/></svg>
  <h1>Dlubal RFEM | 6.02.0015 | Segment.rf6 | 2021</h1>
  <div class="winbtns">
    <button aria-label="Minimize"><svg viewBox="0 0 12 12"><path d="M1 6.500h10"/></svg></button>
    <button aria-label="Maximize"><svg viewBox="0 0 12 12"><path d="M1.500 1.500h9v9h-9z"/></svg></button>
    <button aria-label="Close"><svg viewBox="0 0 12 12"><path d="M1 1l10 10M11 1L1 11"/></svg></button>
  </div>
</header>
<nav class="menubar">
  <svg class="logo"><use href="#rfem"/></svg>
  <button>File</button><button>Edit</button><button>View</button><button>Insert</button><button>Assign</button><button>Calculate</button><button>Results</button><button>Tools</button><button>Options</button><button>Window</button><button>CAD-BIM</button><button>Help</button>
  <div class="mdi">
    <button aria-label="Minimize view"><svg viewBox="0 0 10 10"><path d="M2 8h6" stroke="#4b5a6c" stroke-width="2"/></svg></button>
    <button aria-label="Restore view"><svg><use href="#float"/></svg></button>
    <button aria-label="Close view"><svg><use href="#close"/></svg></button>
  </div>
</nav>

<div class="toolbar">
  <div class="group"><i class="grip"></i>
    <button class="b"><svg><use href="#new"/></svg></button><button class="b"><svg><use href="#open"/></svg></button><button class="b"><svg><use href="#center"/></svg></button><button class="b"><svg><use href="#cloud"/></svg></button><button class="b"><svg><use href="#manage"/></svg></button><button class="b"><svg><use href="#save"/></svg></button><button class="b"><svg><use href="#print"/></svg></button><button class="a" aria-label="More"></button><button class="b"><svg><use href="#newdoc"/></svg></button><button class="b"><svg><use href="#doc"/></svg></button><i class="sep"></i><button class="b"><svg><use href="#undo"/></svg></button><button class="a dim" aria-label="More"></button><button class="b"><svg><use href="#redo"/></svg></button><button class="a" aria-label="More"></button><i class="sep"></i><button class="b on"><svg><use href="#plist"/></svg></button><button class="b on"><svg><use href="#pgrid"/></svg></button><button class="b"><svg><use href="#glist"/></svg></button><button class="b"><svg><use href="#console"/></svg></button><button class="b"><svg><use href="#script"/></svg></button><button class="b"><svg><use href="#panel"/></svg></button>
  </div>
  <div class="group"><i class="grip"></i>
    <button class="b"><svg><use href="#selpoly"/></svg></button><button class="b"><svg><use href="#selell"/></svg></button><button class="b"><svg><use href="#selcirc"/></svg></button><button class="b"><svg><use href="#sellas"/></svg></button><button class="b"><svg><use href="#selpm"/></svg></button>
  </div>
  <div class="group grow"><i class="grip"></i>
    <button class="b"><svg><use href="#loadnew"/></svg></button><button class="b"><svg><use href="#load"/></svg></button>
    <button class="lc"><i class="sw"></i><i class="sw"></i><span class="tag">G</span><span class="code">LC1</span><span class="name">G</span><svg class="chev"><use href="#chev"/></svg></button>
    <button class="step grey"><svg><use href="#prev"/></svg></button><button class="step"><svg><use href="#next"/></svg></button>
    <button class="b"><svg><use href="#funnelx"/></svg></button><button class="a" aria-label="More"></button><button class="b"><svg><use href="#eyearc"/></svg></button><button class="b"><svg><use href="#xxxarc"/></svg></button><button class="b"><svg><use href="#eyeload"/></svg></button><button class="b"><svg><use href="#xxxload"/></svg></button><button class="b"><svg><use href="#eyegrid"/></svg></button><button class="a" aria-label="More"></button><button class="b"><svg><use href="#eyewedge"/></svg></button><button class="b"><svg><use href="#xxxwedge"/></svg></button><i class="sep"></i><button class="b"><svg><use href="#wedgegear"/></svg></button><button class="b"><svg><use href="#abacus"/></svg></button><button class="a" aria-label="More"></button>
  </div>
  <div class="group last"><i class="grip"></i><button class="b"><svg><use href="#zoomx"/></svg></button><button class="b"><svg><use href="#cube"/></svg></button><button class="more">»</button></div>
</div>

<div class="toolbar">
  <div class="group"><i class="grip"></i>
    <button class="b"><svg><use href="#nnode"/></svg></button><button class="a" aria-label="More"></button><button class="b"><svg><use href="#nline"/></svg></button><button class="b"><svg><use href="#nmember"/></svg></button><button class="a" aria-label="More"></button><button class="b"><svg><use href="#npoly"/></svg></button><button class="a" aria-label="More"></button><i class="sep"></i><button class="b"><svg><use href="#supp"/></svg></button><button class="b"><svg><use href="#suppl"/></svg></button><button class="b"><svg><use href="#supps"/></svg></button><i class="sep"></i><button class="b"><svg><use href="#dimx"/></svg></button><button class="a" aria-label="More"></button><button class="b"><svg><use href="#dimxx"/></svg></button><i class="sep"></i><button class="b"><svg><use href="#nsurf"/></svg></button><button class="a" aria-label="More"></button><button class="b"><svg><use href="#nsurf2"/></svg></button><button class="a" aria-label="More"></button><button class="b"><svg><use href="#nopen"/></svg></button><button class="a" aria-label="More"></button><button class="b"><svg><use href="#nsurf3"/></svg></button><button class="a" aria-label="More"></button><button class="b"><svg><use href="#cubeblue"/></svg></button><i class="sep"></i><button class="b"><svg><use href="#lnode"/></svg></button><button class="b"><svg><use href="#lline"/></svg></button><button class="b"><svg><use href="#lsurf"/></svg></button><button class="b"><svg><use href="#lsolid"/></svg></button><button class="b"><svg><use href="#imperf"/></svg></button><button class="a" aria-label="More"></button><button class="b"><svg><use href="#lfree"/></svg></button><button class="a" aria-label="More"></button>
  </div>
  <div class="group grow"><i class="grip"></i>
    <button class="b"><svg><use href="#funnelw"/></svg></button><i class="sep"></i><button class="b"><svg><use href="#frame"/></svg></button><button class="b"><svg><use href="#film"/></svg></button><i class="sep"></i><button class="b"><svg><use href="#moment"/></svg></button><button class="b"><svg><use href="#fan"/></svg></button><button class="b"><svg><use href="#dice"/></svg></button><button class="b"><svg><use href="#react"/></svg></button><button class="b"><svg><use href="#wedge"/></svg></button><i class="sep"></i><button class="b g"><svg><use href="#s1"/></svg></button><button class="b g"><svg><use href="#s2"/></svg></button><button class="b g"><svg><use href="#s3"/></svg></button><button class="b"><svg><use href="#s4"/></svg></button><button class="b"><svg><use href="#s5"/></svg></button><button class="b"><svg><use href="#s6"/></svg></button><i class="sep"></i><button class="b"><svg><use href="#check"/></svg></button><button class="a dim" aria-label="More"></button>
  </div>
  <div class="group"><i class="grip"></i>
    <button class="lc cs"><i class="sw"></i><span class="code">1 - Global XYZ</span><svg class="chev"><use href="#chev"/></svg></button>
    <button class="b"><svg><use href="#axes"/></svg></button><i class="sep"></i><button class="b"><svg><use href="#hatch"/></svg></button><button class="more">»</button>
  </div>
  <div class="group last"><i class="grip"></i><button class="b"><svg><use href="#ttri"/></svg></button><button class="a" aria-label="More"></button><button class="more">»</button></div>
</div>

<main class="main">
<aside class="navigator">
  <div class="panehead"><h2>Navigator - Data</h2><button aria-label="Float"><svg><use href="#float"/></svg></button><button aria-label="Close"><svg><use href="#close"/></svg></button></div>
  <ul class="tree">
    <li class="l0"><svg class="ti"><use href="#rfem"/></svg>RFEM</li>
    <li class="l1 open"><b class="tw"></b><svg class="ti"><use href="#file"/></svg><strong>Segment.rf6 | 2021</strong></li>
    <li class="l2"><b class="tw"></b><svg class="ti"><use href="#folder"/></svg>Basic Objects</li>
    <li class="l2"><b class="tw"></b><svg class="ti"><use href="#folder"/></svg>Special Objects</li>
    <li class="l2"><b class="tw"></b><svg class="ti"><use href="#folder"/></svg>Types for Nodes</li>
    <li class="l2"><b class="tw"></b><svg class="ti"><use href="#folder"/></svg>Types for Lines</li>
    <li class="l2"><b class="tw"></b><svg class="ti"><use href="#folder"/></svg>Types for Members</li>
    <li class="l2"><b class="tw"></b><svg class="ti"><use href="#folder"/></svg>Types for Surfaces</li>
    <li class="l2"><b class="tw"></b><svg class="ti"><use href="#folder"/></svg>Types for Solids</li>
    <li class="l2"><b class="tw"></b><svg class="ti"><use href="#folder"/></svg>Types for Special Objects</li>
    <li class="l2"><b class="tw"></b><svg class="ti"><use href="#folder"/></svg>Imperfections</li>
    <li class="l2"><b class="tw"></b><svg class="ti"><use href="#stages"/></svg>Construction Stages</li>
    <li class="l2"><b class="tw"></b><svg class="ti"><use href="#folder"/></svg>Load Cases &amp; Combinations</li>
    <li class="l2"><b class="tw"></b><svg class="ti"><use href="#folder"/></svg>Load Wizards</li>
    <li class="l2"><b class="tw"></b><svg class="ti"><use href="#folder"/></svg>Loads</li>
    <li class="l2"><b class="tw"></b><svg class="ti"><use href="#folder"/></svg>Results</li>
    <li class="l2"><b class="tw"></b><svg class="ti"><use href="#folder"/></svg>Guide Objects</li>
    <li class="l2 open"><b class="tw"></b><svg class="ti"><use href="#folderopen"/></svg>Stress-Strain Analysis</li>
    <li class="l3"><b class="tw"></b><svg class="ti"><use href="#situ"/></svg>Design Situations</li>
    <li class="l3"><b class="tw"></b><svg class="ti"><use href="#tri1"/></svg>Objects to Analyze - Stresses</li>
    <li class="l3"><b class="tw"></b><svg class="ti"><use href="#tri2"/></svg>Objects to Analyze - Stress Ranges</li>
    <li class="l3"><b class="tw"></b><svg class="ti"><use href="#mats"/></svg>Materials</li>
    <li class="l3"><b class="tw"></b><svg class="ti"><use href="#sect"/></svg>Sections</li>
    <li class="l3"><b class="tw"></b><svg class="ti"><use href="#thick"/></svg>Thicknesses</li>
    <li class="l3"><b class="tw"></b><svg class="ti"><use href="#mconf"/></svg>Member Configurations</li>
    <li class="l3"><b class="tw"></b><svg class="ti"><use href="#sconf"/></svg>Surface Configurations</li>
    <li class="l2 leaf"><b class="tw"></b><svg class="ti"><use href="#folder"/></svg>Printout Reports</li>
  </ul>
  <div class="navtabs"><button class="sel" aria-label="Data"><svg class="i18"><use href="#navtree"/></svg></button><button aria-label="Display"><svg class="i16"><use href="#viewtab"/></svg></button><button aria-label="Views"><svg class="i18"><use href="#cam"/></svg></button></div>
</aside>

<div class="right">
<section class="workspace"><span class="viewname">Vi</span>
  <div class="dialog" role="dialog" aria-labelledby="dlg-title">
    <div class="dlgtitle"><svg class="i16"><use href="#app"/></svg><h2 id="dlg-title">New Member Configuration | Stress-Strain Analysis</h2>
      <div class="winbtns"><button class="off" disabled aria-label="Minimize"><svg viewBox="0 0 12 12"><path d="M1 6.500h10"/></svg></button><button aria-label="Maximize"><svg viewBox="0 0 12 12"><path d="M1.500 1.500h9v9h-9z"/></svg></button><button aria-label="Close"><svg viewBox="0 0 12 12"><path d="M1 1l10 10M11 1L1 11"/></svg></button></div>
    </div>
    <div class="dlgbody">
      <div class="list">
        <h3>List</h3>
        <div class="listbox"><div class="listrow"><span><i class="sq"></i></span><span class="n">1</span><span class="t">Standard</span></div><div class="listfill"><span></span><span></span><span></span></div></div>
        <div class="listbtns"><button class="d"><svg><use href="#nwin"/></svg></button><button class="d"><svg><use href="#cwin"/></svg></button><button class="d dis s1" disabled><svg><use href="#chk1"/></svg></button><button class="d dis" disabled><svg><use href="#chk3"/></svg></button><button class="d s2"><svg><use href="#del"/></svg></button></div>
      </div>
      <div class="content">
        <div class="toprow">
          <div class="box no"><label for="no">No.</label><input id="no" value="1" readonly></div>
          <div class="box name"><label for="cname">Member Configuration Name</label><div class="combo"><select id="cname"><option>Standard</option></select><svg class="chev"><use href="#chev"/></svg></div></div>
          <div class="box assigned"><label for="assigned">Assigned to Members No. / Member Sets No.</label>
            <div class="assignrow"><div class="field"><svg class="i12"><use href="#member"/></svg><input id="assigned" value="All" readonly></div><button class="pick" aria-label="Select Member(s) / Member Set(s) in Graphics"><svg><use href="#pickx"/></svg></button></div>
            <div class="tooltip" role="tooltip">Select Member(s) / Member Set(s) in Graphics</div></div>
        </div>
        <div class="tabs"><button class="sel">Main</button><button>Special Options...</button></div>
        <div class="tabpage">
          <div class="leftcol">
            <div class="group2 stresses">
              <h3>Stresses to Calculate</h3>
              <div class="gridwrap">
              <table class="stab">
                <colgroup><col class="c0"><col class="c1"><col class="c2"><col class="c2"><col></colgroup>
                <thead><tr class="strip"><th></th><th></th><th></th><th></th><th></th></tr>
                <tr class="heads"><th></th><th></th><th>Stress<br>Type</th><th>Limit Stress<br>Type</th><th>User-Defined Limit Stress<br>[N/mm<sup>2</sup>]</th></tr></thead>
                <tbody>
                <tr class="cut"><th></th><td><div><input type="checkbox" aria-label="Row 35"></div></td><td><div><span>σ (M + M)</span></div></td><td></td><td></td></tr>
                <tr><th>36</th><td><input type="checkbox" aria-label="Row 36"></td><td>σ<sub>x</sub> (N + M<sub>y</sub> + M<sub>z</sub>)</td><td>Limit Normal Stress</td><td></td></tr>
                <tr><th>37</th><td><input type="checkbox" aria-label="Row 37"></td><td>σ<sub>x</sub> (N<sub>c</sub> + M<sub>y,c</sub> + M<sub>z,c</sub>)</td><td>Limit Normal Stress</td><td></td></tr>
                <tr><th>38</th><td><input type="checkbox" aria-label="Row 38"></td><td>σ<sub>x</sub> (N<sub>t</sub> + M<sub>y,t</sub> + M<sub>z,t</sub>)</td><td>Limit Normal Stress</td><td></td></tr>
                <tr><th>39</th><td><input type="checkbox" aria-label="Row 39"></td><td>σ<sub>x</sub> (N + M<sub>u</sub> + M<sub>v</sub>)</td><td>Limit Normal Stress</td><td></td></tr>
                <tr><th>40</th><td><input type="checkbox" aria-label="Row 40"></td><td>σ<sub>x</sub> (N<sub>c</sub> + M<sub>u,c</sub> + M<sub>v,c</sub>)</td><td>Limit Normal Stress</td><td></td></tr>
                <tr><th>41</th><td><input type="checkbox" aria-label="Row 41"></td><td>σ<sub>x</sub> (N<sub>t</sub> + M<sub>u,t</sub> + M<sub>v,t</sub>)</td><td>Limit Normal Stress</td><td></td></tr>
                <tr><th>42</th><td><input type="checkbox" aria-label="Row 42"></td><td>σ<sub>x,tot</sub></td><td>Limit Normal Stress</td><td></td></tr>
                <tr><th>43</th><td><input type="checkbox" aria-label="Row 43"></td><td>σ<sub>t</sub> (p<sub>i</sub>)</td><td>Limit Normal Stress</td><td></td></tr>
                <tr><th>44</th><td><input type="checkbox" aria-label="Row 44"></td><td>τ (V<sub>y</sub>)</td><td>Limit Shear Stress</td><td></td></tr>
                <tr><th>45</th><td><input type="checkbox" aria-label="Row 45"></td><td>τ (V<sub>z</sub>)</td><td>Limit Shear Stress</td><td></td></tr>
                <tr><th>46</th><td><input type="checkbox" aria-label="Row 46"></td><td>τ (V<sub>u</sub>)</td><td>Limit Shear Stress</td><td></td></tr>
                <tr><th>47</th><td><input type="checkbox" aria-label="Row 47"></td><td>τ (V<sub>v</sub>)</td><td>Limit Shear Stress</td><td></td></tr>
                <tr><th>48</th><td><input type="checkbox" aria-label="Row 48"></td><td>τ<sub>St.Venant</sub> (M<sub>T</sub>)</td><td>Limit Shear Stress</td><td></td></tr>
                <tr><th>49</th><td><input type="checkbox" aria-label="Row 49"></td><td>τ<sub>Bredt</sub> (M<sub>T</sub>)</td><td>Limit Shear Stress</td><td></td></tr>
                <tr><th>52</th><td><input type="checkbox" aria-label="Row 52"></td><td>τ (M<sub>T</sub>)</td><td>Limit Shear Stress</td><td></td></tr>
                <tr><th>53</th><td><input type="checkbox" aria-label="Row 53"></td><td>τ (V<sub>y</sub> + V<sub>z</sub>)</td><td>Limit Shear Stress</td><td></td></tr>
                <tr><th>54</th><td><input type="checkbox" aria-label="Row 54"></td><td>τ (V<sub>u</sub> + V<sub>v</sub>)</td><td>Limit Shear Stress</td><td></td></tr>
                <tr><th>55</th><td><input type="checkbox" aria-label="Row 55"></td><td>τ (V<sub>y</sub> + V<sub>z</sub> + M<sub>T</sub>)</td><td>Limit Shear Stress</td><td></td></tr>
                <tr><th>56</th><td><input type="checkbox" aria-label="Row 56"></td><td>τ (V<sub>u</sub> + V<sub>v</sub> + M<sub>T</sub>)</td><td>Limit Shear Stress</td><td></td></tr>
                <tr><th>57</th><td><input type="checkbox" aria-label="Row 57"></td><td>τ<sub>tot</sub></td><td>Limit Shear Stress</td><td></td></tr>
                <tr><th>58</th><td><input type="checkbox" checked aria-label="Row 58"></td><td>σ<sub>eqv,von Mises</sub></td><td>Limit Equivalent S...</td><td></td></tr>
                <tr><th>59</th><td><input type="checkbox" aria-label="Row 59"></td><td>σ<sub>eqv,von Mises,mod</sub></td><td>Limit Equivalent S...</td><td></td></tr>
                <tr><th>60</th><td><input type="checkbox" aria-label="Row 60"></td><td>σ<sub>eqv,Tresca</sub></td><td>Limit Equivalent S...</td><td></td></tr>
                <tr><th>61</th><td><input type="checkbox" aria-label="Row 61"></td><td>σ<sub>eqv,Rankine</sub></td><td>Limit Equivalent S...</td><td></td></tr>
                </tbody>
              </table>
              <div class="vscroll"><svg><use href="#up"/></svg><span class="track"></span><span class="thumb"></span><svg><use href="#down"/></svg></div>
              </div>
              <div class="filterrow"><div class="combo"><select aria-label="Filter"><option>All</option></select><svg class="chev"><use href="#chev"/></svg></div><button class="d"><svg><use href="#dbdoc"/></svg></button><button class="d green"><svg><use href="#chk1"/></svg></button><button class="d"><svg><use href="#chk2"/></svg></button><button class="d green"><svg><use href="#chk3"/></svg></button></div>
            </div>
            <div class="group2 comment">
              <h3><label for="comment">Comment</label></h3>
              <div class="commentrow"><div class="combo"><select id="comment"><option></option></select><svg class="chev"><use href="#chev"/></svg></div><button class="d dis" disabled><svg><use href="#stack"/></svg></button></div>
            </div>
          </div>
          <article class="info">
            <h4>SA0401</h4>
            <p>Equivalent stress (von Mises).</p>
            <div class="formula"><em>σ</em><sub>eqv,vonMises</sub><span class="op">=</span><svg class="rad" viewBox="0 0 10 22"><path d="M0 13l2-1 3 9 5-20.500" fill="none" stroke="#333"/></svg><span class="under"><em>σ</em><span class="ss"><span>2</span><span>x,tot</span></span><span class="op">−</span><em>σ</em><sub>x,tot</sub><span class="dotop">·</span><em>σ</em><sub>t</sub>(p<sub>i</sub>)<span class="op">+</span><em>σ</em><sub>t</sub>(p<sub>i</sub>)<sup>2</sup><span class="op">+</span>3<span class="dotop">·</span><em>τ</em><span class="ss"><span>2</span><span>tot</span></span></span></div>
            <dl><dt>σ<sub>x,tot</sub></dt><dd>Total normal stress</dd><dt>σ<sub>t</sub> (p<sub>i</sub>)</dt><dd>Tangential (hoop) stress due to internal pressure in the pipe section</dd><dt>τ<sub>tot</sub></dt><dd>Total shear stress</dd></dl>
            <p class="range">Calculation of stress range.<br>Δσ<sub>eqv,von Mises</sub> = σ<sub>eqv,von Mises,max</sub> - σ<sub>eqv,von Mises,min</sub></p>
          </article>
        </div>
      </div>
    </div>
    <div class="dlgfoot">
      <button class="d"><svg><use href="#help"/></svg></button><button class="d g10"><svg><use href="#units"/></svg></button><button class="color g10" aria-label="Color"></button><button class="d"><svg><use href="#disp"/></svg></button><button class="d g10"><svg><use href="#imp"/></svg></button><button class="d"><svg><use href="#exp"/></svg></button><button class="d g10"><svg><use href="#dbdoc"/></svg></button><button class="d dis g10" disabled><svg><use href="#fx"/></svg></button>
      <div class="okrow"><button class="push default">OK</button><button class="push">Cancel</button><button class="push" disabled>Apply</button></div>
      <svg class="sizer" viewBox="0 0 9 9"><path d="M6 0h2v2H6zM3 3h2v2H3zM6 3h2v2H6zM0 6h2v2H0zM3 6h2v2H3zM6 6h2v2H6z" fill="#bbb"/></svg>
    </div>
  </div>
</section>

<section class="tablepane">
  <div class="panehead"><h2>Member Configurations | Stress-Strain Analysis</h2><button aria-label="Float"><svg><use href="#float"/></svg></button><button aria-label="Close"><svg><use href="#close"/></svg></button></div>
  <nav class="submenu"><button>Go To</button><button>Edit</button><button>Selection</button><button>View</button><button>Settings</button></nav>
  <div class="tbar">
    <button class="pickbox first"><svg class="i14"><use href="#prism"/></svg>Stress-Strain Analysis<svg class="chev"><use href="#chev"/></svg></button><button class="step"><svg><use href="#prev"/></svg></button><button class="step grey"><svg><use href="#next"/></svg></button><i class="sep wide"></i>
    <button class="pickbox second"><svg class="i16"><use href="#ttri"/></svg>Input Data<svg class="chev"><use href="#chev"/></svg></button><button class="step grey"><svg><use href="#prev"/></svg></button><button class="step grey"><svg><use href="#next"/></svg></button><i class="sep"></i>
    <button class="b on"><svg><use href="#jump1"/></svg></button><button class="b on"><svg><use href="#jump2"/></svg></button><i class="sep thin"></i><button class="b"><svg><use href="#eyewedge"/></svg></button><button class="b"><svg><use href="#xxxwedge"/></svg></button><i class="sep"></i><button class="b"><svg><use href="#rowins"/></svg></button><button class="b"><svg><use href="#rowdel"/></svg></button><button class="b"><svg><use href="#rowgrn"/></svg></button><button class="b"><svg><use href="#rowred"/></svg></button><i class="sep"></i><button class="b"><svg><use href="#excel"/></svg></button><i class="sep"></i><button class="b"><svg><use href="#globe"/></svg></button><i class="sep"></i><button class="b"><svg><use href="#manage"/></svg></button><i class="sep"></i><button class="b"><svg><use href="#help"/></svg></button><i class="endline"></i>
  </div>
  <div class="mwrap">
    <table class="mtab">
      <colgroup><col class="m0"><col class="m1"><col class="m2"><col class="m3"><col></colgroup>
      <thead><tr class="strip"><th></th><th></th><th></th><th></th><th></th></tr>
      <tr class="heads"><th>Config.<br>No.</th><th>Member Configuration<br>Name</th><th class="marked">Assigned to<br>Members No.</th><th>Options</th><th>Comment</th></tr></thead>
      <tbody><tr class="cur"><th>1</th><td class="focus"><i class="sq"></i>Standard</td><td>All</td><td></td><td></td></tr><tr><th>2</th><td></td><td></td><td></td><td></td></tr></tbody>
    </table>
    <div class="vscroll short"><svg><use href="#up"/></svg><span class="thumb"></span><svg><use href="#down"/></svg></div>
  </div>
  <div class="sheets">
    <div class="pager"><button aria-label="First"><svg><use href="#first"/></svg></button><button aria-label="Previous"><svg><use href="#prev"/></svg></button><span>7 of 10</span><button aria-label="Next"><svg><use href="#next"/></svg></button><button aria-label="Last"><svg><use href="#last"/></svg></button></div>
    <div class="sheettabs"><button>Design Situations</button><button>Objects to Analyze - Stresses</button><button>Objects to Analyze - Stress Ranges</button><button>Materials</button><button>Sections</button><button>Thicknesses</button><button class="sel">Member Configurations</button><button>Surface Configurations</button><button>Member Sets</button></div>
    <button class="sc" aria-label="Scroll left"><svg class="dim"><use href="#prev"/></svg></button><button class="sc" aria-label="Scroll right"><svg><use href="#next"/></svg></button>
  </div>
</section>
</div>
</main>

<footer class="status">
  <span class="msg">Member No. 32: Cable</span>
  <div class="modes"><button class="down">SNAP</button><button>GRID</button><button class="down">LGRID</button><button class="down">OSNAP</button><span class="vis">Visibility mode</span></div>
  <span class="cs2">CS: Global XYZ</span><span class="cell plane">Plane: XZ</span><span class="cell">X: -8.991 m</span><span class="cell">Y: 0.010 m</span><span class="cell zz">Z: -27.718 m</span>
  <svg class="sizer" viewBox="0 0 9 9"><path d="M6 0h2v2H6zM3 3h2v2H3zM6 3h2v2H6zM0 6h2v2H0zM3 6h2v2H3zM6 6h2v2H6z" fill="#bbb"/></svg>
</footer>
</div>
</body>
</html>
```
FILE: styles.css
```css
* { box-sizing: border-box; }
body { margin: 0; background: #fff; color: #000; font: 11px/16px "Open Sans", "Noto Sans", sans-serif; }
button, input, select { font: inherit; color: inherit; border: 0; padding: 0; margin: 0; background: none; }
button { display: flex; align-items: center; justify-content: center; white-space: nowrap; }
h1, h2, h3, h4, p, ul, dl, dd { margin: 0; padding: 0; font-size: inherit; }
i { font-style: normal; display: block; flex: none; }
svg { display: block; flex: none; }
.sprite { position: absolute; width: 0; height: 0; }
.mono { font-family: "Liberation Mono", monospace; font-weight: bold; }
.sans { font-family: "Open Sans", sans-serif; font-weight: 600; }
.i18 { width: 18px; height: 18px; }
.i16 { width: 16px; height: 16px; }
.i14 { width: 14px; height: 14px; }
.i12 { width: 12px; height: 12px; }
.chev { width: 10px; height: 6px; }

.app { display: flex; flex-direction: column; min-height: 100vh; border: 1px solid #a0a0a0; padding-bottom: 15px; }
.titlebar { display: flex; height: 45px; padding-left: 8px; align-items: flex-start; }
.titlebar > svg { margin-top: 11px; }
.titlebar h1 { margin: 11px auto 0 4px; font-weight: normal; line-height: 18px; }
.winbtns { display: flex; }
.winbtns button { width: 45px; height: 30px; }
.winbtns svg { width: 12px; height: 12px; fill: none; stroke: #000; }
.winbtns .off svg { stroke: #bbb; }
.titlebar .winbtns { margin-top: 14px; }

.menubar { display: flex; height: 21px; background: #f7f7f7; border-bottom: 1px solid #e4e4e4; padding-left: 1px; align-items: center; }
.menubar .logo { width: 16px; height: 12px; }
.menubar button { padding: 0 8px; }
.menubar button:nth-of-type(even) { padding-left: 9px; }
.mdi { display: flex; margin-left: auto; gap: 1px; }
.menubar .mdi button { width: 17px; height: 18px; padding: 0; background: #fff; border: 1px solid #ddd; }
.mdi svg { width: 9px; height: 9px; opacity: .7; }

.toolbar { display: flex; height: 28px; background: #f7f7f7; border-bottom: 1px solid #e0e0e0; }
.group { display: flex; align-items: center; border-right: 1px solid #d9d9d9; flex: none; padding-bottom: 1px; }
.group.grow { flex: 1; }
.group.last { border-right: 0; width: 84px; }
.toolbar + .toolbar .group.last { width: 61px; }
.toolbar + .toolbar { border-bottom: 0; height: 27px; }
.grip { width: 9px; height: 18px; background: radial-gradient(circle, #aaa 1px, transparent 1px) 3px 0 / 3px 4px repeat-y; }
.group:first-child .grip { width: 10px; }
.b { width: 26px; height: 26px; flex: none; }
.b svg { width: 18px; height: 18px; }
.b.on { background: #cce4f7; border: 1px solid #92c9f2; height: 24px; }
.b.g { fill: #777; }
.a { width: 12px; height: 20px; flex: none; }
.a::before { content: ""; border: 4px solid transparent; border-top-color: #222; border-bottom: 0; }
.a.dim::before { border-top-color: #888; }
.sep { width: 1px; height: 18px; background: #d5d5d5; margin: 0 3px; }
.more { width: 14px; margin-left: auto; font-size: 13px; color: #444; }
.lc { height: 21px; background: #e6e6f2; flex: 1; margin-left: 1px; padding: 0 4px; gap: 4px; justify-content: flex-start; }
.lc .chev, .pickbox .chev { margin-left: auto; }
.sw { width: 11px; height: 12px; background: #ccfdff; }
.lc .tag { width: 30px; height: 13px; line-height: 13px; background: #000; color: #fff; }
.lc .code { padding-left: 2px; width: 37px; text-align: left; }
.lc .name { padding-left: 4px; border-left: 1px solid #fff; }
.lc.cs { width: 131px; flex: none; }
.lc.cs .code { width: auto; }
.step { width: 15px; height: 21px; margin-left: 1px; background: #e6e6f2; }
.step svg { width: 8px; height: 8px; }
.step.grey { background: #d0d0d0; fill: #555; }

.main { display: flex; flex: 1; background: #f7f7f7; }
.navigator { width: 273px; padding-left: 1px; display: flex; flex-direction: column; margin-right: 4px; padding-bottom: 2px; }
.panehead { display: flex; height: 21px; align-items: center; background: #d8e5f2; padding: 0 6px; color: #404040; }
.panehead h2 { margin-right: auto; font-weight: 700; }
.panehead button { width: 21px; height: 20px; }
.panehead button:last-child { margin-right: -4px; }
.panehead svg { width: 10px; height: 10px; }
.tree { flex: 1; list-style: none; background: #fff; border: 2px solid #c8c8d4; border-bottom-width: 1px; margin-top: 1px; margin-left: 1px; }
.tree li { display: flex; align-items: center; height: 18px; }
.tree strong { font-weight: 600; }
.tree .ti { width: 16px; height: 16px; margin-right: 5px; }
.tree .l0, .tree .l1 { padding-left: 3px; }
.tree .l2 { padding-left: 23px; }
.tree .l3 { padding-left: 43px; }
.tw { width: 20px; }
.tw::before { content: ""; display: block; width: 5px; height: 5px; margin-left: 1px; border: solid #a0a0a0; border-width: 2px 2px 0 0; rotate: 45deg; }
.open .tw::before { border-color: #333; rotate: 135deg; margin-left: 3px; margin-top: -3px; }
.leaf .tw { visibility: hidden; }
.navtabs { display: flex; height: 26px; margin-left: 1px; border: solid #c8c8d4; border-width: 0 1px 2px 2px; }
.navtabs button { width: 39px; height: 23px; background: #ececec; border: 1px solid #c8c8d4; border-left: 0; }
.navtabs .sel { background: #fff; height: 24px; border-color: #fff #c8c8d4 #fff #fff; }

.right { flex: 1; display: flex; flex-direction: column; min-width: 0; }
.workspace { position: relative; flex: 1; background: #fff; }
.viewname { display: block; padding: 4px 5px; }
.dialog { position: absolute; inset: 2px 18px -2px 15px; z-index: 2; display: flex; flex-direction: column; border: 1px solid #777; background: #fff; }
.dlgtitle { display: flex; height: 30px; align-items: center; padding-left: 8px; }
.dlgtitle h2 { margin: 2px auto 0 6px; font-weight: normal; line-height: 18px; }
.dlgbody { flex: 1; display: flex; gap: 10px; background: #d0d0d6; padding: 9px 8px 8px 9px; }
h3, .box label { display: block; color: #5b6f96; font-weight: 600; font-size: 11px; line-height: 18px; }
.list { width: 159px; background: #fff; padding: 0 1px 4px; display: flex; flex-direction: column; }
.list h3 { padding: 0 4px 1px; }
.listbox { flex: 1; display: flex; flex-direction: column; margin-bottom: 5px; }
.listrow, .listfill { display: grid; grid-template-columns: 22px 12px 1fr; }
.listrow { height: 18px; background: #cce8ff; align-items: center; }
.listfill { flex: 1; }
.listrow span, .listfill span { border-right: 1px solid #e4e4e4; height: 100%; line-height: 18px; }
.listrow span:last-child, .listfill span:last-child { border: 0; }
.listrow .n { text-align: right; padding-right: 2px; }
.listrow .t { padding-left: 3px; }
.sq { width: 11px; height: 11px; background: #8fd7f5; margin: 3px; }
.listbtns { display: flex; padding-left: 4px; gap: 3px; }
.s1 { margin-left: 7px; }
.s2 { margin-left: 5px; }
.d { width: 25px; height: 21px; background: #cce4f7; flex: none; }
.d svg { width: 18px; height: 18px; }
.d.dis { background: #e6e6e6; color: #999; }
.d.dis svg { filter: grayscale(1) opacity(.7); }
.green { color: #1fa04c; }
.content { flex: 1; display: flex; flex-direction: column; min-width: 0; }
.toprow { display: flex; gap: 10px; height: 47px; }
.box { background: #fff; padding: 0 5px; }
.box label { padding-bottom: 4px; }
.box.no { width: 60px; }
.no input { display: block; width: 50px; height: 20px; background: #e6e6e6; text-align: right; padding-right: 5px; }
.box.name { width: 409px; }
.assigned { flex: 1; position: relative; }
.assignrow { display: flex; gap: 4px; }
.field { flex: 1; height: 20px; background: #e6e6e6; display: flex; align-items: center; padding-left: 6px; gap: 3px; }
.field input { flex: 1; min-width: 0; }
.pick { width: 29px; height: 25px; margin: -2px -3px 0 0; border: 3px solid #ee4540; background: #c8c4dc; }
.pick svg { width: 17px; height: 17px; }
.tooltip { position: absolute; right: -4px; top: 49px; z-index: 3; border: 1px solid #767676; background: #fff; color: #575757; padding: 0 4px; white-space: nowrap; }
.combo { display: grid; align-items: center; background: #e6e6f2; height: 21px; flex: 1; }
.combo select { grid-area: 1 / 1; appearance: none; width: 100%; height: 21px; padding-left: 3px; }
.combo .chev { grid-area: 1 / 1; justify-self: end; margin-right: 4px; pointer-events: none; }
.tabs { display: flex; align-items: flex-end; margin-top: 10px; height: 23px; }
.tabs button { height: 21px; padding: 0 8px; background: #dedede; }
.tabs .sel { width: 63px; height: 23px; background: #ebebeb; }
.tabpage { flex: 1; display: flex; gap: 10px; padding: 8px 9px; background: #ebebeb; }
.leftcol { width: 473px; display: flex; flex-direction: column; gap: 10px; }
.group2 { background: #fff; }
.stresses { flex: 1; display: flex; flex-direction: column; }
.group2 h3 { padding-left: 5px; }
.gridwrap { display: flex; }
table { border-collapse: separate; border-spacing: 0; table-layout: fixed; }
th, td { padding: 0; font-weight: normal; overflow: hidden; white-space: nowrap; }
.stab { width: 456px; }
.c0 { width: 60px; } .c1 { width: 25px; } .c2 { width: 110px; }
.strip th { height: 9px; background: #c8c8c8; border: solid #fff; border-width: 0 1px 1px 0; }
.strip th:first-child { background: #e1e1e1; }
.heads th { height: 33px; background: #f0f0f0; border: solid #d0d0d0; border-width: 0 1px 1px 0; line-height: 13px; padding-top: 2px; }
.heads th:first-child { background: #e1e1e1; }
sub, sup { font-size: 9px; line-height: 0; }
.heads sup { vertical-align: 3px; }
tbody th, tbody td { height: 16px; line-height: 15px; border: solid #dcdcdc; border-width: 0 1px 1px 0; }
tbody th { background: #e1e1e1; border-color: #f7f7f7; }
.stab td { padding-left: 4px; }
.stab td:nth-child(3), .stab td:nth-child(5) { background: #f8f9f3; }
.stab td sub { vertical-align: -2px; }
.stab .cut th, .stab .cut td { height: 4px; line-height: 0; }
.cut div { height: 3px; display: flex; align-items: flex-end; line-height: 8px; overflow: hidden; }
.stab input { appearance: none; display: block; width: 13px; height: 13px; margin-left: 1px; border: 1px solid #333; background: #fff; flex: none; }
.stab input:checked::before { content: ""; display: block; width: 9px; height: 5px; margin: 2px 1px; border: solid #333; border-width: 0 0 1px 1px; rotate: -45deg; }
.vscroll { flex: 1; background: #f0f0f0; display: flex; flex-direction: column; align-items: center; margin-left: 1px; padding: 4px 0 3px; }
.vscroll svg { width: 10px; height: 10px; }
.vscroll .track { flex: 236; }
.vscroll .thumb { flex: 164; width: 15px; background: #cdcdcd; margin-bottom: 3px; }
.filterrow { display: flex; gap: 3px; padding: 5px 4px 4px 60px; }
.filterrow .combo { margin-right: 2px; }
.comment { height: 47px; }
.comment h3 { height: 22px; }
.comment label { font-weight: 600; }
.commentrow { display: flex; gap: 5px; padding: 0 5px; }
.info { flex: 1; background: #fff; padding: 8px; line-height: 20px; font-family: Lato, "Open Sans", sans-serif; }
.info h4 { font: 700 11px/16px "Open Sans", sans-serif; margin-bottom: 12px; }
.info sub, .info sup { font-size: 10px; }
.info .formula { display: flex; align-items: center; height: 22px; margin: 26px 0 30px 36px; line-height: 14px; color: #333; font: 600 11px/14px "Open Sans", sans-serif; }
.formula em { font: italic 13px/14px "Liberation Serif", serif; }
.info .formula sub { font-size: 8px; align-self: flex-end; line-height: 14px; }
.info .formula sup { font-size: 8px; align-self: flex-start; line-height: 10px; }
.rad { width: 10px; height: 22px; }
.under { display: flex; align-items: center; height: 21px; border-top: 1px solid #333; }
.op { padding: 0 3px; font-weight: 400; font-size: 13px; }
.dotop { padding: 0 3px; }
.ss { display: flex; flex-direction: column; font-size: 8px; line-height: 8px; }
dl { display: grid; grid-template-columns: 37px auto; padding-left: 2px; white-space: nowrap; }
.range { margin-top: 30px; line-height: 16px; }
.dlgfoot { display: flex; height: 43px; padding: 0 9px 0 8px; gap: 3px; align-items: center; position: relative; }
.g10 { margin-left: 7px; }
.color { width: 21px; height: 21px; border: 1px solid #000; background: #ccfdff; }
.okrow { display: flex; gap: 10px; margin-left: auto; }
.push { width: 81px; height: 21px; background: #e1e1e1; border: 1px solid #adadad; }
.push.default { border: 2px solid #0078d7; }
.push:disabled { background: #cccccc; border-color: #bfbfbf; color: #888; }
.sizer { position: absolute; right: 1px; bottom: 1px; width: 9px; height: 9px; }

.submenu { display: flex; height: 21px; border-bottom: 1px solid #e0e0e0; }
.submenu button { padding: 0 8px; }
.tbar { display: flex; align-items: center; height: 27px; padding: 0 0 2px 1px; }
.pickbox { height: 21px; background: #e6e6f2; padding: 0 5px; gap: 4px; }
.pickbox.first { width: 201px; }
.pickbox.second { width: 271px; }
.sep.wide { margin: 0 7px 0 3px; }
.sep.thin { margin: 0 1px; }
.tbar .b { height: 24px; }
.endline { width: 1px; height: 25px; background: #d0d0d0; }
.mwrap { display: flex; border: solid #c8c8d4; border-width: 1px 0 2px 1px; background: #fff; }
.mtab { flex: 1; width: 100%; }
.m0 { width: 60px; } .m1 { width: 199px; } .m2 { width: 221px; } .m3 { width: 200px; }
.mtab .heads th { vertical-align: middle; }
.mtab .heads th:nth-child(n+4) { vertical-align: bottom; padding-bottom: 2px; }
.mtab .heads .marked { position: relative; overflow: visible; line-height: 16px; padding-top: 0; }
.marked::after { content: ""; position: absolute; inset: -2px -1px -18px -1px; border: 3px solid #ee4a45; z-index: 1; }
.cur th, .cur td { background: #0078d7; color: #fff; }
.mtab td { padding-left: 5px; }
.mtab .focus { outline: 1px dotted #f0a050; outline-offset: -2px; padding-left: 4px; }
.focus .sq { display: inline-block; margin: 0 5px 0 0; vertical-align: -2px; }
.vscroll.short { flex: none; width: 16px; padding: 3px 0; justify-content: space-between; }
.vscroll.short .thumb { flex: none; height: 18px; width: 15px; margin-bottom: 22px; }
.sheets { display: flex; height: 22px; }
.pager { display: flex; width: 124px; align-items: center; justify-content: space-between; padding: 0 4px; fill: #333; }
.pager svg, .sc svg { width: 9px; height: 8px; }
.sheettabs { display: flex; flex: 1; overflow: hidden; min-width: 0; border-left: 2px solid #c8c8d4; }
.sheettabs button { flex: none; height: 20px; padding: 0 8px 0 7px; background: #ececec; border: solid #c8c8d4; border-width: 0 2px 2px 0; }
.sheettabs .sel { background: #fff; height: 22px; border-bottom: 0; }
.sc { width: 15px; }
.sc .dim { fill: #888; }

.status { position: relative; display: flex; height: 22px; align-items: center; background: #f7f7f7; padding-left: 7px; }
.msg { flex: 1; }
.modes { display: flex; width: 359px; gap: 2px; align-items: center; }
.modes button { padding: 0 3px; height: 18px; border: 1px solid transparent; }
.modes .down { border: 1px solid #bbb; border-right-color: #eee; border-bottom-color: #eee; background: #efefef; }
.vis { width: 88px; padding-left: 2px; border-right: 1px solid #d0d0d0; }
.cs2 { width: 151px; }
.cell { width: 76px; border-left: 1px solid #d0d0d0; padding-left: 4px; }
.plane { width: 65px; }
.zz { width: 94px; }
```
